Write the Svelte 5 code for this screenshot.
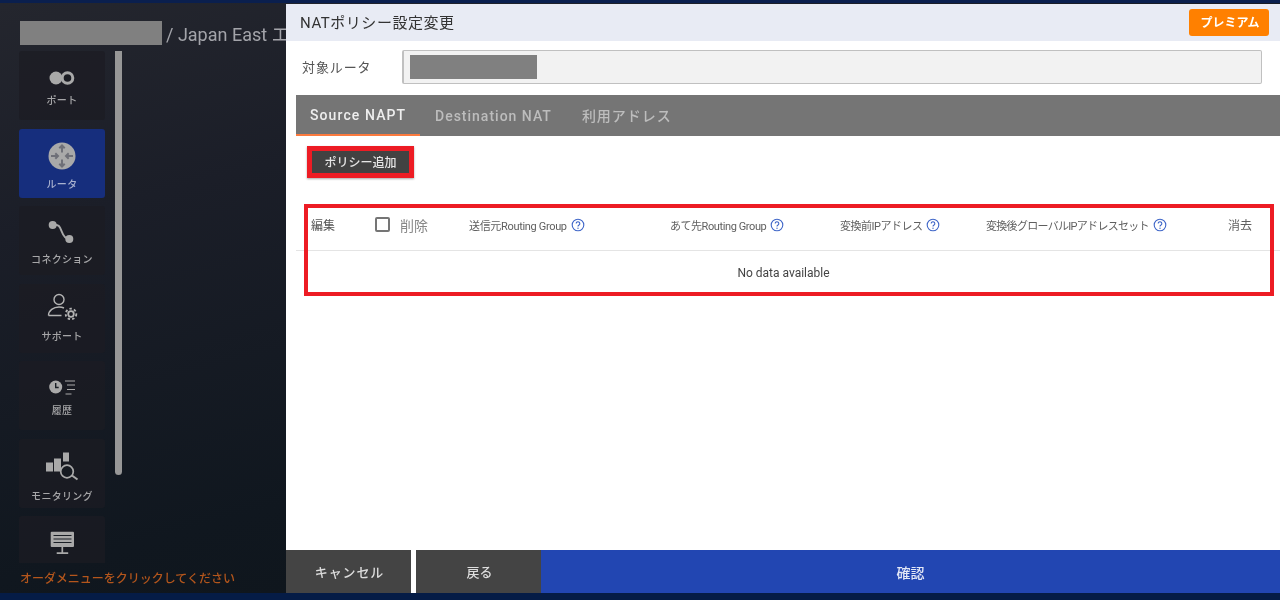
<script>
  const items = [
    { key: 'port', label: 'ポート' },
    { key: 'router', label: 'ルータ', active: true },
    { key: 'conn', label: 'コネクション' },
    { key: 'support', label: 'サポート' },
    { key: 'history', label: '履歴' },
    { key: 'monitor', label: 'モニタリング' },
    { key: 'order', label: '' }
  ];
  const cols = [
    { label: '送信元Routing Group', help: true },
    { label: 'あて先Routing Group', help: true },
    { label: '変換前IPアドレス', help: true },
    { label: '変換後グローバルIPアドレスセット', help: true },
    { label: '消去' }
  ];
</script>

{#snippet help()}
  <svg class="help" viewBox="0 0 14 14" aria-hidden="true">
    <circle cx="7" cy="7" r="5.8" fill="none" stroke="#3f66c8" stroke-width="1.1" />
    <path d="M5.2 5.6a1.8 1.8 0 1 1 2.8 1.5c-.7.4-1 .8-1 1.5" fill="none" stroke="#3f66c8" stroke-width="1.1" />
    <circle cx="7" cy="10.3" r=".7" fill="#3f66c8" />
  </svg>
{/snippet}

{#snippet icon(key)}
  {#if key === 'port'}
    <svg viewBox="0 0 30 30">
      <circle cx="9" cy="15" r="6.500" fill="#a9a9a9" />
      <circle cx="20.500" cy="15" r="5.300" fill="#1b1c23" stroke="#a9a9a9" stroke-width="3" />
    </svg>
  {:else if key === 'router'}
    <svg viewBox="0 0 30 30">
      <circle cx="15" cy="15" r="13.500" fill="#a9a9a9" />
      <g fill="none" stroke="#6f7078" stroke-width="2">
        <path d="M15 4.500v7M12.300 7.200 15 4.500l2.700 2.700" />
        <path d="M15 25.500v-7M12.300 22.800 15 25.500l2.700-2.700" />
        <path d="M4 15h7M8.300 12.300 11 15l-2.700 2.700" />
        <path d="M26 15h-7M21.700 12.300 19 15l2.700 2.700" />
      </g>
    </svg>
  {:else if key === 'conn'}
    <svg viewBox="0 0 30 30">
      <path d="M6 7C12 6 13 9 14.500 13S18 21 22 21" fill="none" stroke="#a9a9a9" stroke-width="2" />
      <circle cx="5.700" cy="7" r="4" fill="#a9a9a9" />
      <circle cx="22.300" cy="21" r="4" fill="#a9a9a9" />
    </svg>
  {:else if key === 'support'}
    <svg viewBox="0 0 30 30">
      <circle cx="12" cy="3.500" r="5" fill="none" stroke="#b4b4b4" stroke-width="1.400" />
      <path d="M1.500 19.500c0-5 5-8.500 10.500-8.500 2 0 3.500.3 5 1M1.500 19.500h13" fill="none" stroke="#b4b4b4" stroke-width="1.400" />
      <circle cx="24" cy="18" r="2.800" fill="none" stroke="#b4b4b4" stroke-width="1.800" />
      <circle cx="24" cy="18" r="5.300" fill="none" stroke="#b4b4b4" stroke-width="1.800" stroke-dasharray="2.400 2.150" />
    </svg>
  {:else if key === 'history'}
    <svg viewBox="0 0 30 30">
      <circle cx="8.700" cy="14" r="6.500" fill="#a9a9a9" />
      <path d="M8.700 10v4.500h3" fill="none" stroke="#1a1f26" stroke-width="1.400" />
      <path d="M18 8h10M20 12h8M20 16.500h8M18.500 21h6" fill="none" stroke="#a9a9a9" stroke-width="1.100" />
    </svg>
  {:else if key === 'monitor'}
    <svg viewBox="0 0 30 30">
      <rect x="-1" y="11.500" width="7" height="9" fill="#a9a9a9" />
      <rect x="7" y="7.500" width="7" height="13" fill="#a9a9a9" />
      <rect x="16" y="1.500" width="6" height="9" fill="#a9a9a9" />
      <circle cx="20" cy="20.500" r="6.300" fill="#161a21" stroke="#a9a9a9" stroke-width="1.700" />
      <path d="M25 24.500l5.500 4" stroke="#a9a9a9" stroke-width="2" />
    </svg>
  {:else}
    <svg viewBox="0 0 30 30">
      <rect x="3.700" y="3.700" width="23.300" height="15.300" rx="1" fill="#a9a9a9" />
      <path d="M6.500 7.500h18M6.500 11h18M6.500 14.500h18" stroke="#1a1f26" stroke-width="1.200" />
      <path d="M15.300 19v6M9.700 25.200h11.500" stroke="#a9a9a9" stroke-width="1.700" />
    </svg>
  {/if}
{/snippet}

<div class="page">
  <aside class="side">
    <div class="crumb"><span class="redact crumb-block"></span><span class="crumb-text">/ Japan East エ</span></div>
    <div class="scrollarea">
      <nav class="nav">
        {#each items as item}
          <div class="item {item.key}" class:active={item.active}>
            <span class="ico">{@render icon(item.key)}</span>
            {#if item.label}<span class="lbl">{item.label}</span>{/if}
          </div>
        {/each}
      </nav>
      <div class="thumb"></div>
    </div>
    <div class="hint">オーダメニューをクリックしてください</div>
  </aside>

  <main class="modal">
    <header class="head">
      <h1>NATポリシー設定変更</h1>
      <button class="premium">プレミアム</button>
    </header>

    <div class="body">
      <div class="target">
        <label for="t">対象ルータ</label>
        <div class="field" id="t"><span class="redact field-block"></span></div>
      </div>

      <div class="tabs">
        <div class="tab on">Source NAPT</div>
        <div class="tab">Destination NAT</div>
        <div class="tab jp">利用アドレス</div>
      </div>

      <div class="actions">
        <button class="add">ポリシー追加</button>
        <span class="callout add-call"></span>
      </div>

      <div class="tablewrap">
        <div class="thead">
          <div class="th edit">編集</div>
          <div class="th del"><span class="check"></span><span>削除</span></div>
          {#each cols as c}
            <div class="th">{c.label}{#if c.help}{@render help()}{/if}</div>
          {/each}
        </div>
        <div class="empty">No data available</div>
        <span class="callout table-call"></span>
      </div>
    </div>

    <footer class="foot">
      <button class="f cancel">キャンセル</button>
      <button class="f back">戻る</button>
      <button class="f ok">確認</button>
    </footer>
  </main>
</div>

<style>
  :global(body) { margin: 0; background: #0d1520; }
  * { box-sizing: border-box; }
  .page {
    width: 1280px; height: 600px; overflow: hidden;
    display: grid; grid-template-columns: 286px 1fr;
    border-top: 3px solid #0a1f4e; border-bottom: 7px solid #051c46;
    background: linear-gradient(165deg, #24262e 0%, #1b1e28 25%, #10171f 62%, #0c1317 100%);
    font-family: Roboto, "Noto Sans CJK JP", sans-serif;
    filter: blur(.35px);
  }
  button { border: 0; font-family: inherit; padding: 0; }

  .side { display: flex; flex-direction: column; padding-left: 19px; min-width: 0; overflow: hidden; }
  .crumb { display: flex; align-items: center; gap: 4px; padding: 18px 0 0 1px; white-space: nowrap; height: 42px; }
  .redact { display: block; background: #808080; }
  .crumb-block { width: 142px; height: 24px; flex: none; }
  .crumb-text { font-size: 18px; color: #a3a4aa; }
  .scrollarea { position: relative; height: 512px; overflow: hidden; margin-top: 6px; }
  .nav { display: flex; flex-direction: column; gap: 8.5px; width: 86px; }
  .item {
    flex: none; height: 69px; border-radius: 3px; background: rgba(28, 28, 34, .72);
    display: flex; flex-direction: column; align-items: center; padding-top: 12px; gap: 2px;
  }
  .item.active { background: #162e7d; }
  .ico { display: block; width: 30px; height: 30px; }
  .port .ico { height: 29px; }
  .router .ico { height: 35px; }
  .conn .ico { height: 33px; }
  .support .ico { height: 32px; }
  .history .ico { height: 29px; }
  .monitor .ico { height: 37px; }
  .ico svg { display: block; width: 30px; height: 30px; overflow: visible; }
  .lbl { font-size: 10px; line-height: 14px; color: #a6a6a8; letter-spacing: .3px; white-space: nowrap; font-weight: 500; }
  .item.active .lbl { color: #a9b2cf; }
  .thumb { position: absolute; left: 96px; top: -6px; width: 7px; height: 430px; background: #979797; border-radius: 0 0 4px 4px; }
  .hint { font-size: 12px; line-height: 16px; padding: 8px 0 0 1px; color: #b4561c; font-weight: 500; white-space: nowrap; }

  .modal { background: #fff; display: flex; flex-direction: column; min-width: 0; margin-top: 1px; }
  .head {
    height: 37px; flex: none; background: #e8ebf4; display: flex; align-items: center;
    justify-content: space-between; padding: 0 11px 0 14px;
  }
  h1 { margin: 0 0 3px; font-size: 15px; font-weight: 400; color: #333; letter-spacing: .55px; }
  .premium {
    width: 80px; height: 27px; border-radius: 3px; background: #ff8000; color: #fff;
    font-size: 12px; font-weight: 700; padding: 0 0 2px 2px;
  }
  .body { flex: 1; min-height: 0; padding: 9px 0 0 10px; }
  .target { display: flex; align-items: center; height: 34px; padding-left: 6px; }
  label { flex: none; width: 100px; margin-bottom: 2px; font-size: 13px; letter-spacing: .9px; color: #555; }
  .field {
    flex: none; width: 860px; height: 34px; background: #f2f2f2; border: 1px solid #c0c0c0; border-left-width: 2px;
    border-radius: 2px; display: flex; align-items: center; padding-left: 6px;
  }
  .field-block { width: 127px; height: 24px; }
  .tabs { margin-top: 11px; height: 41px; background: #757575; display: flex; }
  .tab {
    height: 41px; padding: 0 15px; display: flex; align-items: center; font-size: 14px; font-weight: 500;
    letter-spacing: 1px; color: #bdbdbd; white-space: nowrap;
  }
  .tab.jp { padding-bottom: 2px; }
  .tab.on { width: 124px; padding: 0 14px; color: #eee; letter-spacing: 1.1px; border-bottom: 2px solid #fb7a3e; }
  .actions { position: relative; height: 68px; padding: 15px 0 0 15px; }
  .add {
    display: block; width: 99px; height: 23px; background: #424242; color: #e6e6e6; font-size: 12px; font-weight: 500;
    padding-bottom: 3px;
  }
  .callout { position: absolute; border: 4px solid #ed1c24; pointer-events: none; }
  .add-call { left: 11px; top: 10px; width: 107px; height: 32px; border-width: 5px; box-shadow: 0 1px 2px rgba(0,0,0,.35); }
  .tablewrap { position: relative; height: 92px; }
  .thead {
    height: 47px; display: grid; align-items: center; padding-bottom: 5px;
    grid-template-columns: 79px 94px 201px 170px 146px 243px 1fr;
    border-bottom: 1px solid #e4e4e4; font-size: 11px; color: #5f5f5f;
  }
  .th { white-space: nowrap; display: flex; align-items: center; }
  .th:nth-child(3) { letter-spacing: -.33px; }
  .th:nth-child(4) { letter-spacing: -.4px; }
  .th:nth-child(5) { letter-spacing: -.5px; }
  .th:nth-child(6) { letter-spacing: -.7px; }
  .th:last-child { font-size: 12px; margin-left: -1px; }
  .edit { padding-left: 15px; font-size: 12px; color: #555; }
  .del { gap: 10px; font-size: 14px; color: #888; margin-top: 1px; }
  .check { width: 15px; height: 15px; border: 2px solid #757575; border-radius: 2px; display: block; margin-top: -1px; }
  .help { width: 14px; height: 14px; margin-left: 4px; flex: none; }
  .empty { height: 43px; display: flex; align-items: center; justify-content: center; font-size: 12px; color: #444; padding-right: 9px; }
  .table-call { left: 8px; top: 0; width: 970px; height: 92px; }

  .foot { flex: none; height: 43px; display: flex; }
  .f { height: 43px; color: #ddd; font-size: 13px; font-weight: 500; }
  .cancel { width: 125px; background: #444; letter-spacing: .9px; padding-left: 2px; }
  .back { width: 125px; background: #444; margin-left: 5px; padding-left: 2px; }
  .ok { flex: 1; background: #2246b2; color: #e4e8f6; font-size: 14px; }
</style>
